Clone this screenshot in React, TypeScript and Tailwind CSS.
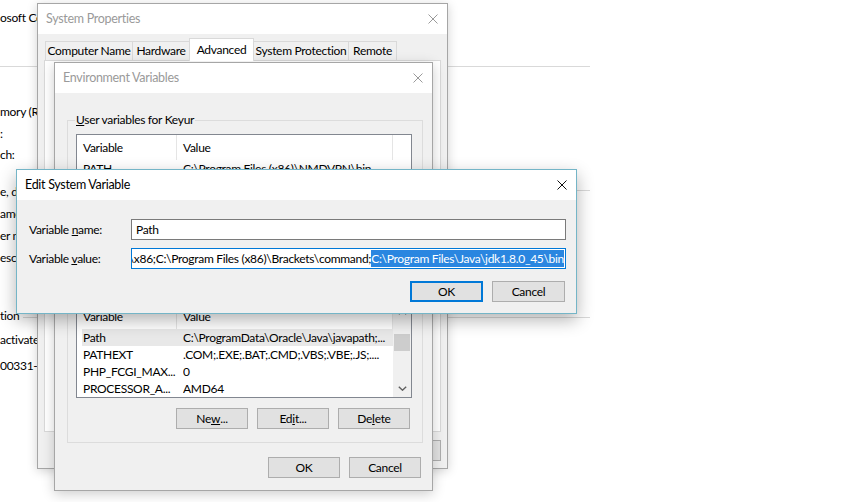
import React from "react";

const CloseX = ({ color }: { color: string }) => (
  <svg width="10" height="10" viewBox="0 0 10 10">
    <path d="M0.5 0.5 L9.5 9.5 M9.5 0.5 L0.5 9.5" stroke={color} strokeWidth="1" fill="none" />
  </svg>
);

const ChevUp = () => (
  <svg width="9" height="5" viewBox="0 0 9 5">
    <path d="M0.8 4.2 L4.5 0.8 L8.2 4.2" stroke="#606060" strokeWidth="1.4" fill="none" />
  </svg>
);
const ChevDown = () => (
  <svg width="9" height="5" viewBox="0 0 9 5">
    <path d="M0.8 0.8 L4.5 4.2 L8.2 0.8" stroke="#606060" strokeWidth="1.4" fill="none" />
  </svg>
);

const TitleBar = ({ title, active }: { title: string; active?: boolean }) => (
  <div className="h-[30px] bg-white flex items-center justify-between shrink-0">
    <span className={"pl-[8px] text-[12.5px] " + (active ? "text-black" : "text-[#9a9a9a]")}>{title}</span>
    <span className="w-[29px] flex items-center justify-center">
      <CloseX color={active ? "#111" : "#9a9a9a"} />
    </span>
  </div>
);

const Btn = ({ children, w = "w-[72px]", focused }: { children: React.ReactNode; w?: string; focused?: boolean }) => (
  <div
    className={
      w +
      " h-[21px] bg-[#e1e1e1] flex items-center justify-center text-black whitespace-nowrap " +
      (focused ? "border-2 border-[#0078d7]" : "border border-[#adadad]")
    }
  >
    {children}
  </div>
);

type Row = { name: string; value: string; sel?: boolean };

const ListBox = ({ rows, scroll }: { rows: Row[]; scroll?: boolean }) => (
  <div className="h-[95px] border border-[#828790] bg-white flex overflow-hidden">
    <div className="w-[316px] flex flex-col">
      <div className="h-[25px] flex shrink-0">
        <div className="w-[100px] border-r border-[#e5e5e5] pl-[6px] flex items-center">Variable</div>
        <div className="flex-1 border-r border-[#e5e5e5] pl-[6px] flex items-center">Value</div>
      </div>
      {rows.map((r) => (
        <div
          key={r.name}
          className={"h-[17px] ml-[5px] flex items-center shrink-0 whitespace-nowrap " + (r.sel ? "bg-[#e8e8e8]" : "")}
        >
          <div className="w-[101px] pl-[1px] overflow-hidden">{r.name}</div>
          <div className="flex-1 overflow-hidden">{r.value}</div>
        </div>
      ))}
    </div>
    {scroll ? (
      <div className="flex-1 bg-[#f0f0f0] flex flex-col">
        <div className="h-[17px] flex items-center justify-center">
          <ChevUp />
        </div>
        <div className="flex-1 px-[1px]">
          <div className="mt-[13px] h-[17px] bg-[#cdcdcd]" />
        </div>
        <div className="h-[17px] flex items-center justify-center">
          <ChevDown />
        </div>
      </div>
    ) : (
      <div className="flex-1 bg-white" />
    )}
  </div>
);

const Group = ({ label, children }: { label: React.ReactNode; children: React.ReactNode }) => (
  <div className="relative h-[154px] border border-[#dcdcdc] pt-[13px] pl-[8px] pr-[10px]">
    <span className="absolute left-[7px] -top-[9px] px-[1px] bg-[#f0f0f0] leading-[16px] whitespace-nowrap">{label}</span>
    {children}
  </div>
);

export default function App() {
  return (
    <div className="relative w-[860px] h-[502px] overflow-hidden bg-white text-[12px] tracking-[-0.3px] text-black [font-family:Lato,'Noto_Sans',sans-serif]">
      {/* background control panel page */}
      <div className="w-[590px] flex flex-col">
        <div className="h-[36px] flex items-center whitespace-nowrap">osoft Corporation</div>
        <div className="h-[60px] pt-[30px]">
          <div className="h-px bg-[#d9d9d9]" />
        </div>
        <div className="h-[5px]" />
        <div className="h-[22px] flex items-center whitespace-nowrap">mory (RAM):</div>
        <div className="h-[21px] flex items-center whitespace-nowrap">:</div>
        <div className="h-[22px] flex items-center whitespace-nowrap">ch:</div>
        <div className="h-[15px]" />
        <div className="h-[22px] flex items-center whitespace-nowrap gap-[6px]">
          <span>e, domain, and workgroup settings</span>
          <div className="flex-1 h-px bg-[#d9d9d9] -mt-[4px]" />
        </div>
        <div className="h-[22px] flex items-center whitespace-nowrap">ame:</div>
        <div className="h-[22px] flex items-center whitespace-nowrap">er name:</div>
        <div className="h-[22px] flex items-center whitespace-nowrap">escription:</div>
        <div className="h-[36px]" />
        <div className="h-[22px] flex items-center whitespace-nowrap gap-[4px]">
          <span>tion</span>
          <div className="flex-1 h-px bg-[#d9d9d9] mt-[2px]" />
        </div>
        <div className="h-[2px]" />
        <div className="h-[22px] flex items-center whitespace-nowrap">activated</div>
        <div className="h-[4px]" />
        <div className="h-[22px] flex items-center whitespace-nowrap">00331-20000-00000-AA000</div>
      </div>

      {/* System Properties */}
      <div className="absolute left-[37px] top-[3px] w-[411px] h-[466px] border border-[#a6a6a6] bg-[#f0f0f0] flex flex-col shadow-[0_2px_10px_rgba(0,0,0,0.18)]">
        <TitleBar title="System Properties" />
        <div className="flex-1 flex flex-col pl-[6px] pr-[6px] pt-[4px]">
          <div className="h-[22px] flex items-end pl-[1px] whitespace-nowrap">
            <div className="w-[88px] h-[19px] border border-b-0 border-[#d9d9d9] flex items-center justify-center">Computer Name</div>
            <div className="w-[58px] h-[19px] -ml-px border border-b-0 border-[#d9d9d9] flex items-center justify-center">Hardware</div>
            <div className="w-[65px] h-[23px] -ml-px -mb-px relative z-10 bg-white border border-b-0 border-[#d9d9d9] flex items-start pt-[2px] justify-center">Advanced</div>
            <div className="w-[96px] h-[19px] -ml-px border border-b-0 border-[#d9d9d9] flex items-center justify-center">System Protection</div>
            <div className="w-[49px] h-[19px] -ml-px border border-b-0 border-[#d9d9d9] flex items-center justify-center">Remote</div>
          </div>
          <div className="h-[372px] bg-white border border-[#d9d9d9]" />
          <div className="mt-[8px] flex justify-end gap-[6px]">
            <Btn w="w-[75px]">OK</Btn>
            <Btn w="w-[75px]">Cancel</Btn>
            <Btn w="w-[75px]">Apply</Btn>
          </div>
        </div>
      </div>

      {/* Environment Variables */}
      <div className="absolute left-[54px] top-[62px] w-[379px] h-[429px] border border-[#a6a6a6] bg-[#f0f0f0] flex flex-col shadow-[0_3px_12px_rgba(0,0,0,0.2)]">
        <TitleBar title="Environment Variables" />
        <div className="flex-1 flex flex-col pl-[12px] pr-[9px] pt-[27px]">
          <Group
            label={
              <>
                <u>U</u>ser variables for Keyur
              </>
            }
          >
            <ListBox
              rows={[
                { name: "PATH", value: "C:\\Program Files (x86)\\NMDVPN\\bin" },
                { name: "TEMP", value: "%USERPROFILE%\\AppData\\Local\\Temp" },
                { name: "TMP", value: "%USERPROFILE%\\AppData\\Local\\Temp" },
              ]}
            />
            <div className="mt-[10px] flex justify-end gap-[9px] pr-[2px]">
              <Btn>
                <u>N</u>ew...
              </Btn>
              <Btn>
                <u>E</u>dit...
              </Btn>
              <Btn>
                <u>D</u>elete
              </Btn>
            </div>
          </Group>
          <div className="h-[15px] shrink-0" />
          <Group
            label={
              <>
                <u>S</u>ystem variables
              </>
            }
          >
            <ListBox
              scroll
              rows={[
                { name: "Path", value: "C:\\ProgramData\\Oracle\\Java\\javapath;...", sel: true },
                { name: "PATHEXT", value: ".COM;.EXE;.BAT;.CMD;.VBS;.VBE;.JS;...." },
                { name: "PHP_FCGI_MAX...", value: "0" },
                { name: "PROCESSOR_A...", value: "AMD64" },
              ]}
            />
            <div className="mt-[10px] flex justify-end gap-[9px] pr-[2px]">
              <Btn>
                Ne<u>w</u>...
              </Btn>
              <Btn>
                Ed<u>i</u>t...
              </Btn>
              <Btn>
                De<u>l</u>ete
              </Btn>
            </div>
          </Group>
          <div className="mt-[14px] flex justify-end gap-[9px] pr-[2px]">
            <Btn>OK</Btn>
            <Btn>Cancel</Btn>
          </div>
        </div>
      </div>

      {/* Edit System Variable */}
      <div className="absolute left-[16px] top-[169px] w-[561px] h-[145px] border border-[#74b5c7] bg-[#f0f0f0] flex flex-col shadow-[0_6px_16px_rgba(0,0,0,0.3)]">
        <TitleBar title="Edit System Variable" active />
        <div className="flex-1 flex flex-col pt-[19px] pl-[12px] pr-[10px]">
          <div className="h-[21px] flex items-center">
            <div className="w-[102px] whitespace-nowrap">
              Variable <u>n</u>ame:
            </div>
            <div className="flex-1 h-[21px] border border-[#7a7a7a] bg-white pl-[4px] flex items-center">Path</div>
          </div>
          <div className="mt-[8px] h-[21px] flex items-center">
            <div className="w-[102px] whitespace-nowrap">
              Variable <u>v</u>alue:
            </div>
            <div className="flex-1 h-[21px] border border-[#0078d7] bg-white px-[1px] flex items-center justify-end overflow-hidden whitespace-nowrap">
              <span className="shrink-0">in\x86;C:\Program Files (x86)\Brackets\command;</span>
              <span className="shrink-0 bg-[#2a86e0] text-white h-[17px] flex items-center">C:\Program Files\Java\jdk1.8.0_45\bin</span>
            </div>
          </div>
          <div className="mt-[12px] flex justify-end gap-[9px] pr-[1px]">
            <Btn w="w-[73px]" focused>
              OK
            </Btn>
            <Btn w="w-[73px]">Cancel</Btn>
          </div>
        </div>
      </div>
    </div>
  );
}
